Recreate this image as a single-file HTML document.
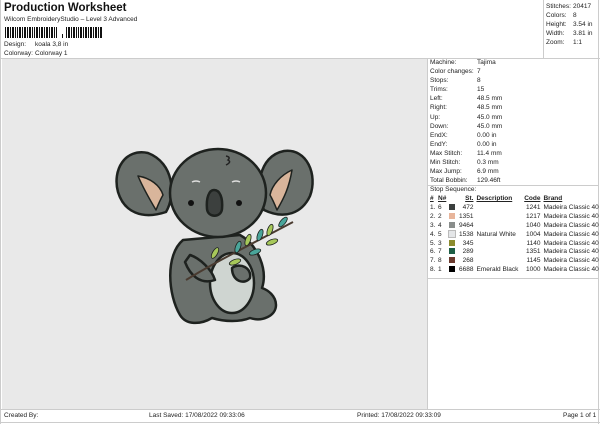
<!DOCTYPE html>
<html><head><style>
*{margin:0;padding:0;box-sizing:border-box}
body{width:600px;height:424px;background:#fff;font-family:"Liberation Sans",sans-serif;color:#222;position:relative;overflow:hidden;font-size:7px}
.a{position:absolute;white-space:nowrap}
.line{position:absolute;background:#ccc}
table{border-collapse:collapse;font-size:7px}
td{padding:0;height:9.1px;line-height:9.1px;white-space:nowrap}
.st td{height:8.9px;line-height:8.9px}
.sw{display:inline-block;width:6px;height:6px;vertical-align:-1px}
</style></head><body>
<div class="a" style="left:4px;top:2px;font-size:11.5px;font-weight:bold;color:#111">Production Worksheet</div>
<div class="a" style="left:4px;top:16px;font-size:6.5px">Wilcom EmbroideryStudio – Level 3 Advanced</div>
<svg class="a" style="left:5px;top:27px" width="100" height="12">
<g fill="#111">
<rect x="0" y="0" width="1" height="11"/><rect x="2" y="0" width="2" height="11"/><rect x="5" y="0" width="1" height="11"/><rect x="7" y="0" width="2" height="11"/><rect x="10" y="0" width="1" height="11"/><rect x="12" y="0" width="1" height="11"/><rect x="14" y="0" width="2" height="11"/><rect x="17" y="0" width="1" height="11"/><rect x="19" y="0" width="2" height="11"/><rect x="22" y="0" width="1" height="11"/><rect x="24" y="0" width="2" height="11"/><rect x="27" y="0" width="1" height="11"/><rect x="29" y="0" width="1" height="11"/><rect x="31" y="0" width="2" height="11"/><rect x="34" y="0" width="1" height="11"/><rect x="36" y="0" width="2" height="11"/><rect x="39" y="0" width="1" height="11"/><rect x="41" y="0" width="2" height="11"/><rect x="44" y="0" width="1" height="11"/><rect x="46" y="0" width="2" height="11"/><rect x="49" y="0" width="1" height="11"/><rect x="51" y="0" width="1" height="11"/>
<rect x="57" y="7" width="1" height="4"/>
<rect x="61" y="0" width="1" height="11"/><rect x="63" y="0" width="2" height="11"/><rect x="66" y="0" width="1" height="11"/><rect x="68" y="0" width="2" height="11"/><rect x="71" y="0" width="1" height="11"/><rect x="73" y="0" width="1" height="11"/><rect x="75" y="0" width="2" height="11"/><rect x="78" y="0" width="1" height="11"/><rect x="80" y="0" width="2" height="11"/><rect x="83" y="0" width="1" height="11"/><rect x="85" y="0" width="2" height="11"/><rect x="88" y="0" width="1" height="11"/><rect x="90" y="0" width="2" height="11"/><rect x="93" y="0" width="1" height="11"/><rect x="95" y="0" width="2" height="11"/>
</g></svg>
<div class="a" style="left:4px;top:41px;font-size:6.5px">Design:</div><div class="a" style="left:35px;top:41px;font-size:6.5px">koala 3,8 in</div>
<div class="a" style="left:4px;top:50px;font-size:6.5px">Colorway:</div><div class="a" style="left:35px;top:50px;font-size:6.5px">Colorway 1</div>

<div class="line" style="left:0;top:58px;width:600px;height:1px"></div>
<div class="a" style="left:2px;top:59px;width:425px;height:350px;background:#e9e9e9"></div>
<div class="line" style="left:427px;top:59px;width:1px;height:350px"></div>
<div class="line" style="left:598px;top:0;width:1px;height:424px"></div>
<div class="line" style="left:543px;top:0;width:1px;height:59px"></div>
<div class="line" style="left:0;top:0;width:1px;height:424px"></div>

<svg class="a" style="left:2px;top:59px" width="425" height="350" viewBox="2 59 425 350">
<g stroke="#1e221f" stroke-width="2.5" stroke-linejoin="round">
<path d="M183 240 C165 255 168 295 180 315 C186 325 200 325 212 318 C225 322 240 322 250 318 C262 322 276 316 276 305 C276 296 268 290 262 288 C268 270 258 245 240 235 Z" fill="#6a706c"/>
<ellipse cx="232" cy="283" rx="22" ry="30" fill="#cfd5d1"/>
<path d="M185 262 C190 275 200 285 215 280 C212 270 200 258 190 255 Z" fill="#6a706c"/>
<path d="M232 268 C240 262 252 268 250 278 C245 285 232 282 232 268 Z" fill="#6a706c"/>
<path d="M148 153 C125 148 112 170 118 192 C124 212 142 220 166 212 C176 195 174 163 148 153 Z" fill="#6a706c"/>
<path d="M284 151 C307 148 318 175 310 196 C302 213 285 220 264 210 C255 190 258 156 284 151 Z" fill="#6a706c"/>
<path d="M138 176 C150 178 160 185 163 195 C160 200 158 205 156 210 C150 200 144 190 138 176 Z" fill="#d9b59b" stroke-width="1.5"/>
<path d="M292 170 C281 175 272 185 270 195 C273 200 275 205 277 210 C284 198 289 188 292 170 Z" fill="#d9b59b" stroke-width="1.5"/>
<ellipse cx="218" cy="193" rx="48" ry="44" fill="#6a706c"/>
<path d="M207 209 C206 198 209 190 214 190 C220 190 223 198 222 209 C221 218 208 218 207 209 Z" fill="#3c403e"/>
<path d="M186 280 C210 265 240 250 293 222" fill="none" stroke="#4a3b30" stroke-width="2"/>
</g>
<circle cx="191" cy="203" r="3" fill="#111"/><circle cx="239" cy="203" r="3" fill="#111"/>
<path d="M192 182 q4 -2 8 0 M232 182 q4 -2 8 0" stroke="#ddd" stroke-width="1.5" fill="none"/>
<path d="M226 156 q5 1 2 4 q4 2 -2 5" stroke="#222" stroke-width="1.5" fill="none"/>
<g fill="#a7c85a" stroke="#1e221f" stroke-width="0.8">
<ellipse cx="215" cy="253" rx="2.5" ry="6" transform="rotate(30 215 253)"/>
<ellipse cx="238" cy="247" rx="2.5" ry="6" transform="rotate(20 238 247)" fill="#4aa59a"/>
<ellipse cx="248" cy="240" rx="2.5" ry="6" transform="rotate(20 248 240)"/>
<ellipse cx="260" cy="235" rx="2.5" ry="6" transform="rotate(20 260 235)" fill="#4aa59a"/>
<ellipse cx="270" cy="230" rx="2.5" ry="6" transform="rotate(20 270 230)"/>
<ellipse cx="283" cy="222" rx="2.5" ry="6" transform="rotate(40 283 222)" fill="#4aa59a"/>
<ellipse cx="235" cy="262" rx="2.5" ry="6" transform="rotate(70 235 262)"/>
<ellipse cx="255" cy="252" rx="2.5" ry="6" transform="rotate(70 255 252)" fill="#4aa59a"/>
<ellipse cx="272" cy="242" rx="2.5" ry="6" transform="rotate(70 272 242)"/>
</g>
</svg>

<table class="a" style="left:546px;top:2px;font-size:6.5px">
<tr><td style="width:27px">Stitches:</td><td>20417</td></tr>
<tr><td>Colors:</td><td>8</td></tr>
<tr><td>Height:</td><td>3.54 in</td></tr>
<tr><td>Width:</td><td>3.81 in</td></tr>
<tr><td>Zoom:</td><td>1:1</td></tr>
</table>

<table class="a" style="left:430px;top:58px;font-size:6.5px">
<tr><td style="width:47px">Machine:</td><td>Tajima</td></tr>
<tr><td>Color changes:</td><td>7</td></tr>
<tr><td>Stops:</td><td>8</td></tr>
<tr><td>Trims:</td><td>15</td></tr>
<tr><td>Left:</td><td>48.5 mm</td></tr>
<tr><td>Right:</td><td>48.5 mm</td></tr>
<tr><td>Up:</td><td>45.0 mm</td></tr>
<tr><td>Down:</td><td>45.0 mm</td></tr>
<tr><td>EndX:</td><td>0.00 in</td></tr>
<tr><td>EndY:</td><td>0.00 in</td></tr>
<tr><td>Max Stitch:</td><td>11.4 mm</td></tr>
<tr><td>Min Stitch:</td><td>0.3 mm</td></tr>
<tr><td>Max Jump:</td><td>6.9 mm</td></tr>
<tr><td>Total Bobbin:</td><td>129.46ft</td></tr>
</table>
<div class="line" style="left:428px;top:185px;width:170px;height:1px"></div>
<div class="a" style="left:430px;top:186px;font-size:6.5px">Stop Sequence:</div>
<table class="a st" style="left:430px;top:195px;font-size:6.5px">
<tr style="font-weight:bold;text-decoration:underline"><td style="width:8px">#</td><td style="width:11px">N#</td><td style="width:10px"></td><td style="width:14px;text-align:right">St.</td><td style="width:49px;padding-left:3px">Description</td><td style="width:18px;text-align:right">Code</td><td style="padding-left:3px">Brand</td></tr>
<tr><td>1.</td><td>6</td><td><span class="sw" style="background:#3b3f3e"></span></td><td style="text-align:right">472</td><td></td><td style="text-align:right">1241</td><td style="padding-left:3px">Madeira Classic 40</td></tr>
<tr><td>2.</td><td>2</td><td><span class="sw" style="background:#e8b59b"></span></td><td style="text-align:right">1351</td><td></td><td style="text-align:right">1217</td><td style="padding-left:3px">Madeira Classic 40</td></tr>
<tr><td>3.</td><td>4</td><td><span class="sw" style="background:#8a8e8c"></span></td><td style="text-align:right">9464</td><td></td><td style="text-align:right">1040</td><td style="padding-left:3px">Madeira Classic 40</td></tr>
<tr><td>4.</td><td>5</td><td><span class="sw" style="background:#e4e6e8;outline:1px solid #bbb"></span></td><td style="text-align:right">1538</td><td style="padding-left:3px">Natural White</td><td style="text-align:right">1004</td><td style="padding-left:3px">Madeira Classic 40</td></tr>
<tr><td>5.</td><td>3</td><td><span class="sw" style="background:#8c8c2e"></span></td><td style="text-align:right">345</td><td></td><td style="text-align:right">1140</td><td style="padding-left:3px">Madeira Classic 40</td></tr>
<tr><td>6.</td><td>7</td><td><span class="sw" style="background:#1d5e45"></span></td><td style="text-align:right">289</td><td></td><td style="text-align:right">1351</td><td style="padding-left:3px">Madeira Classic 40</td></tr>
<tr><td>7.</td><td>8</td><td><span class="sw" style="background:#6b3a2e"></span></td><td style="text-align:right">268</td><td></td><td style="text-align:right">1145</td><td style="padding-left:3px">Madeira Classic 40</td></tr>
<tr><td>8.</td><td>1</td><td><span class="sw" style="background:#000"></span></td><td style="text-align:right">6688</td><td style="padding-left:3px">Emerald Black</td><td style="text-align:right">1000</td><td style="padding-left:3px">Madeira Classic 40</td></tr>
</table>
<div class="line" style="left:428px;top:278px;width:170px;height:1px"></div>

<div class="line" style="left:0;top:409px;width:600px;height:1px"></div>
<div class="line" style="left:0;top:422px;width:600px;height:1px"></div>
<div class="a" style="left:4px;top:412px;font-size:6.5px">Created By:</div>
<div class="a" style="left:149px;top:412px;font-size:6.5px">Last Saved: 17/08/2022 09:33:06</div>
<div class="a" style="left:357px;top:412px;font-size:6.5px">Printed: 17/08/2022 09:33:09</div>
<div class="a" style="left:563px;top:412px;font-size:6.5px">Page 1 of 1</div>
</body></html>
